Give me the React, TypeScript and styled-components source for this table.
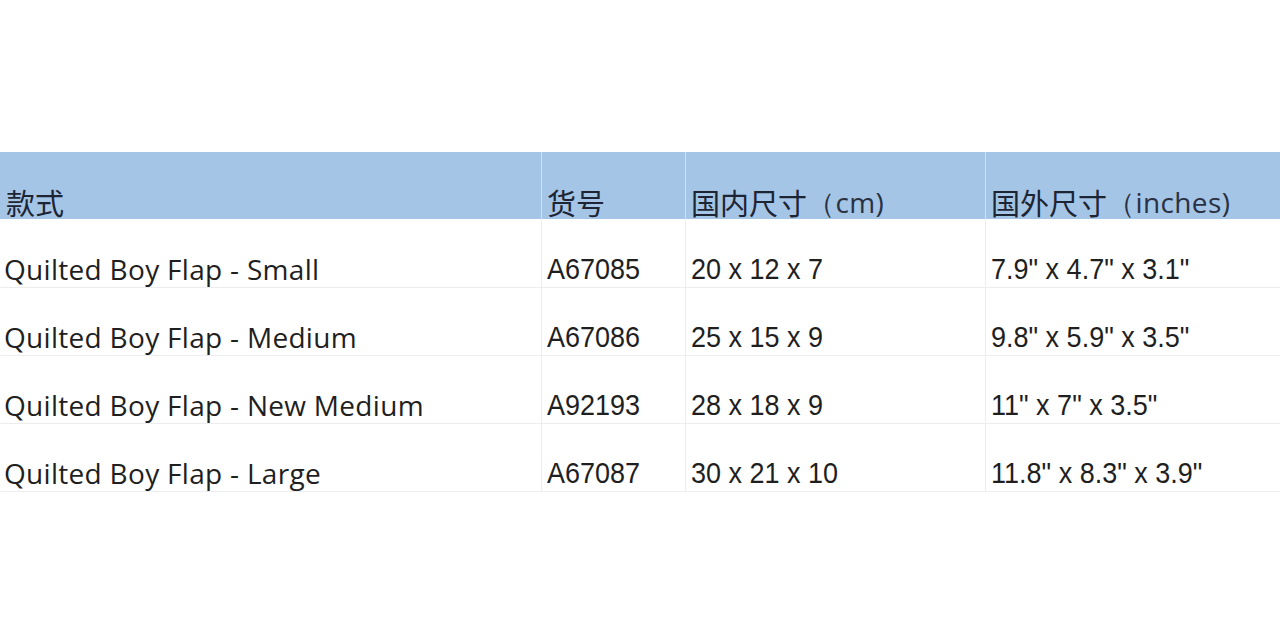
import React from 'react';
import styled, { createGlobalStyle } from 'styled-components';

/* ─── Data ─────────────────────────────────────────────────── */

interface Bag {
  name: string;
  sku: string;
  cm: string;
  inches: string;
}

const bags: Bag[] = [
  { name: 'Quilted Boy Flap - Small', sku: 'A67085', cm: '20 x 12 x 7', inches: '7.9" x 4.7" x 3.1"' },
  { name: 'Quilted Boy Flap - Medium', sku: 'A67086', cm: '25 x 15 x 9', inches: '9.8" x 5.9" x 3.5"' },
  { name: 'Quilted Boy Flap - New Medium', sku: 'A92193', cm: '28 x 18 x 9', inches: '11" x 7" x 3.5"' },
  { name: 'Quilted Boy Flap - Large', sku: 'A67087', cm: '30 x 21 x 10', inches: '11.8" x 8.3" x 3.9"' },
];

/* ─── Styles ───────────────────────────────────────────────── */

const GlobalStyle = createGlobalStyle`
  html, body {
    margin: 0;
    padding: 0;
    background: #ffffff;
  }
`;

const Page = styled.div`
  width: 1280px;
  height: 640px;
  padding-top: 152px;
  box-sizing: border-box;
  overflow: hidden;
`;

const Grid = styled.div`
  display: grid;
  grid-template-columns: 541px 144px 300px 295px;
  grid-template-rows: 67px 69px repeat(3, 68px);
`;

const HeadCell = styled.div<{ $first?: boolean }>`
  background: #a4c5e6;
  border-left: 1px solid ${({ $first }) => ($first ? 'transparent' : '#cfe0f2')};
  display: flex;
  align-items: flex-end;
  padding: 0 0 0 5px;
  font-family: 'Noto Sans CJK SC', 'Noto Sans', sans-serif;
  font-size: 29px;
  line-height: 34px;
  color: #1d2433;
`;

const Paren = styled.span`
  font-family: 'Open Sans', 'Noto Sans', sans-serif;
  font-size: 28px;
  letter-spacing: 0.4px;
  color: #2a3142;
`;

const Cell = styled.div<{ $first?: boolean }>`
  border-left: 1px solid ${({ $first }) => ($first ? 'transparent' : '#ededed')};
  border-bottom: 1px solid #ededed;
  display: flex;
  align-items: flex-end;
  padding: 0 0 0 ${({ $first }) => ($first ? '3px' : '5px')};
  overflow: hidden;
  white-space: nowrap;
  color: #1f1f1f;
`;

const NameText = styled.span`
  font-family: 'Open Sans', 'Noto Sans', sans-serif;
  font-size: 28px;
  letter-spacing: 0.3px;
  line-height: 35px;
`;

const NarrowText = styled.span`
  display: inline-block;
  font-family: 'Liberation Sans', Arial, sans-serif;
  font-size: 30px;
  line-height: 36px;
  transform: scaleX(0.9);
  transform-origin: left bottom;
`;

/* ─── Component ────────────────────────────────────────────── */

export default function App() {
  return (
    <>
      <GlobalStyle />
      <Page>
        <Grid>
          <HeadCell $first>款式</HeadCell>
          <HeadCell>货号</HeadCell>
          <HeadCell>
            国内尺寸<Paren>（cm)</Paren>
          </HeadCell>
          <HeadCell>
            国外尺寸<Paren>（inches)</Paren>
          </HeadCell>

          {bags.map((b) => (
            <React.Fragment key={b.sku}>
              <Cell $first>
                <NameText>{b.name}</NameText>
              </Cell>
              <Cell>
                <NarrowText>{b.sku}</NarrowText>
              </Cell>
              <Cell>
                <NarrowText>{b.cm}</NarrowText>
              </Cell>
              <Cell>
                <NarrowText>{b.inches}</NarrowText>
              </Cell>
            </React.Fragment>
          ))}
        </Grid>
      </Page>
    </>
  );
}
